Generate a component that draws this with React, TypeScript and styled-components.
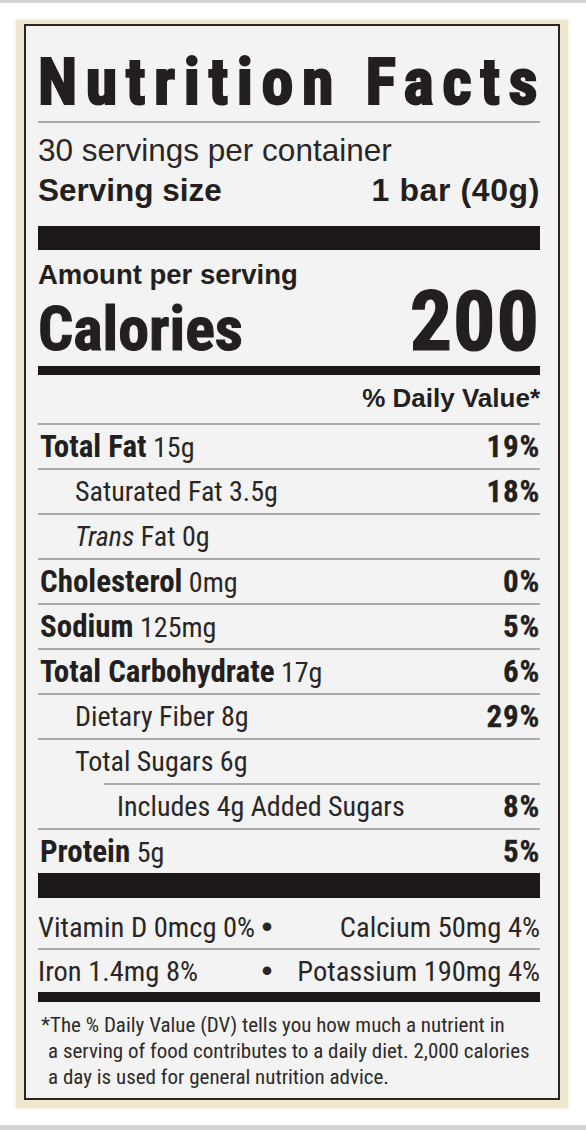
import React from "react";
import styled, { createGlobalStyle } from "styled-components";

const NARROW = `"Roboto Condensed", "Liberation Sans", Arial, sans-serif`;
const WIDE = `"Liberation Sans", Arial, Helvetica, sans-serif`;
const INK = "#231f1e";

const GlobalStyle = createGlobalStyle`
  html, body { margin: 0; padding: 0; background: #ffffff; }
  body { font-family: ${WIDE}; color: ${INK}; }
  * { box-sizing: border-box; }
`;

const Page = styled.div`
  width: 586px;
  height: 1130px;
  border-top: 3px solid #d2d2d2;
  border-bottom: 5px solid #d2d2d2;
  padding: 17px 18px 0 16px;
  overflow: hidden;
`;

const Frame = styled.div`
  width: 552px;
  background: #eee8cf;
  padding: 4px 8px 8px 8px;
  box-shadow: 0 0 2px 1px #f4f0e0;
`;

const Panel = styled.div`
  border: 2px solid #2b2420;
  background: #f3f3f3;
  padding: 25px 18px 8px 12px;
  display: flex;
  flex-direction: column;
`;

const Title = styled.h1`
  margin: 0;
  font-family: ${NARROW};
  font-weight: 700;
  font-size: 64px;
  line-height: 64px;
  letter-spacing: 8.6px;
  white-space: nowrap;
  -webkit-text-stroke: 2px ${INK};
`;

const Rule = styled.div<{ $h: number; $top?: number; $dark?: boolean }>`
  height: ${(p) => p.$h}px;
  margin-top: ${(p) => p.$top ?? 0}px;
  background: ${(p) => (p.$dark ? "#1b1817" : "#a9a9a9")};
`;

const Servings = styled.div`
  font-family: ${WIDE};
  font-size: 31.5px;
  line-height: 36px;
  margin-top: 9px;
  white-space: nowrap;
  color: #2a2625;
`;

const SplitLine = styled.div<{ $top?: number; $h?: number }>`
  display: flex;
  justify-content: space-between;
  align-items: baseline;
  margin-top: ${(p) => p.$top ?? 0}px;
  height: ${(p) => (p.$h ? `${p.$h}px` : "auto")};
  white-space: nowrap;
`;

const ServingLabel = styled.span`
  font-family: ${WIDE};
  font-weight: 700;
  font-size: 31.5px;
  line-height: 36px;
`;

const ServingValue = styled.span`
  font-family: ${WIDE};
  font-weight: 700;
  font-size: 32px;
  line-height: 36px;
  letter-spacing: 0.6px;
`;

const AmountLabel = styled.div`
  font-family: ${WIDE};
  font-weight: 700;
  font-size: 27.5px;
  line-height: 28px;
  margin-top: 11px;
`;

const CaloriesLabel = styled.span`
  font-family: ${NARROW};
  font-weight: 700;
  font-size: 62px;
  line-height: 64px;
  -webkit-text-stroke: 1px ${INK};
`;

const CaloriesValue = styled.span`
  font-family: ${NARROW};
  font-weight: 700;
  font-size: 84px;
  line-height: 66px;
  letter-spacing: 1px;
  -webkit-text-stroke: 1.2px ${INK};
`;

const DVHeader = styled.div`
  text-align: right;
  font-family: ${WIDE};
  font-weight: 700;
  font-size: 26px;
  line-height: 30px;
  margin-top: 8px;
  padding-bottom: 10px;
`;

const Row = styled.div<{ $indent?: number; $lineIndent?: number }>`
  height: 45px;
  padding-left: ${(p) => p.$indent ?? 2}px;
  display: flex;
  align-items: center;
  justify-content: space-between;
  font-family: ${NARROW};
  white-space: nowrap;
  border-top: 2px solid transparent;
  background-image: linear-gradient(#a9a9a9, #a9a9a9);
  background-repeat: no-repeat;
  background-size: calc(100% - ${(p) => p.$lineIndent ?? 0}px) 2px;
  background-position: right top;
  background-origin: border-box;
`;

const Label = styled.span`
  font-weight: 400;
  font-size: 28px;
  color: #2a2625;
`;

const Name = styled.b`
  font-weight: 700;
  font-size: 31px;
  color: ${INK};
`;

const Percent = styled.span`
  font-weight: 700;
  font-size: 31px;
  letter-spacing: 0.8px;
  -webkit-text-stroke: 0.3px ${INK};
`;

const VitRow = styled.div<{ $top?: number; $h: number; $line?: boolean }>`
  display: grid;
  grid-template-columns: 222px 14px 1fr;
  align-items: center;
  height: ${(p) => p.$h}px;
  margin-top: ${(p) => p.$top ?? 0}px;
  font-family: ${NARROW};
  font-size: 28.5px;
  color: #2a2625;
  white-space: nowrap;
  border-bottom: ${(p) => (p.$line ? "2px solid #a9a9a9" : "none")};
`;

const VitRight = styled.span`
  text-align: right;
`;

const Bullet = styled.span`
  justify-self: center;
  font-family: ${WIDE};
  font-size: 30px;
  font-weight: 700;
  line-height: 1;
`;

const Footnote = styled.p`
  margin: 10px 0 0;
  font-family: ${NARROW};
  font-size: 21px;
  line-height: 26px;
  padding-left: 10px;
  text-indent: -7px;
  color: #2e2a29;
  white-space: nowrap;
`;

type Nutrient = {
  name?: string;
  label: React.ReactNode;
  dv?: string;
  indent?: number;
  lineIndent?: number;
};

const nutrients: Nutrient[] = [
  { name: "Total Fat", label: "15g", dv: "19%" },
  { label: "Saturated Fat 3.5g", dv: "18%", indent: 37 },
  { label: <><i>Trans</i> Fat 0g</>, indent: 37 },
  { name: "Cholesterol", label: "0mg", dv: "0%" },
  { name: "Sodium", label: "125mg", dv: "5%" },
  { name: "Total Carbohydrate", label: "17g", dv: "6%" },
  { label: "Dietary Fiber 8g", dv: "29%", indent: 37 },
  { label: "Total Sugars 6g", indent: 37 },
  { label: "Includes 4g Added Sugars", dv: "8%", indent: 79, lineIndent: 66 },
  { name: "Protein", label: "5g", dv: "5%" },
];

export default function App() {
  return (
    <>
      <GlobalStyle />
      <Page>
        <Frame>
          <Panel>
            <Title>Nutrition Facts</Title>
            <Rule $h={2} $top={6} />
            <Servings>30 servings per container</Servings>
            <SplitLine $top={4}>
              <ServingLabel>Serving size</ServingLabel>
              <ServingValue>1 bar (40g)</ServingValue>
            </SplitLine>
            <Rule $h={24} $top={18} $dark />
            <AmountLabel>Amount per serving</AmountLabel>
            <SplitLine $h={77}>
              <CaloriesLabel>Calories</CaloriesLabel>
              <CaloriesValue>200</CaloriesValue>
            </SplitLine>
            <Rule $h={9} $dark />
            <DVHeader>% Daily Value*</DVHeader>
            {nutrients.map((n, i) => (
              <Row key={i} $indent={n.indent} $lineIndent={n.lineIndent}>
                <Label>
                  {n.name && <Name>{n.name}</Name>}
                  {n.name ? " " : ""}
                  {n.label}
                </Label>
                {n.dv && <Percent>{n.dv}</Percent>}
              </Row>
            ))}
            <Rule $h={25} $dark />
            <VitRow $h={44} $top={8} $line>
              <span>Vitamin D 0mcg 0%</span>
              <Bullet>•</Bullet>
              <VitRight>Calcium 50mg 4%</VitRight>
            </VitRow>
            <VitRow $h={42}>
              <span>Iron 1.4mg 8%</span>
              <Bullet>•</Bullet>
              <VitRight>Potassium 190mg 4%</VitRight>
            </VitRow>
            <Rule $h={10} $dark />
            <Footnote>
              *The % Daily Value (DV) tells you how much a nutrient in
              <br />
              a serving of food contributes to a daily diet. 2,000 calories
              <br />
              a day is used for general nutrition advice.
            </Footnote>
          </Panel>
        </Frame>
      </Page>
    </>
  );
}
